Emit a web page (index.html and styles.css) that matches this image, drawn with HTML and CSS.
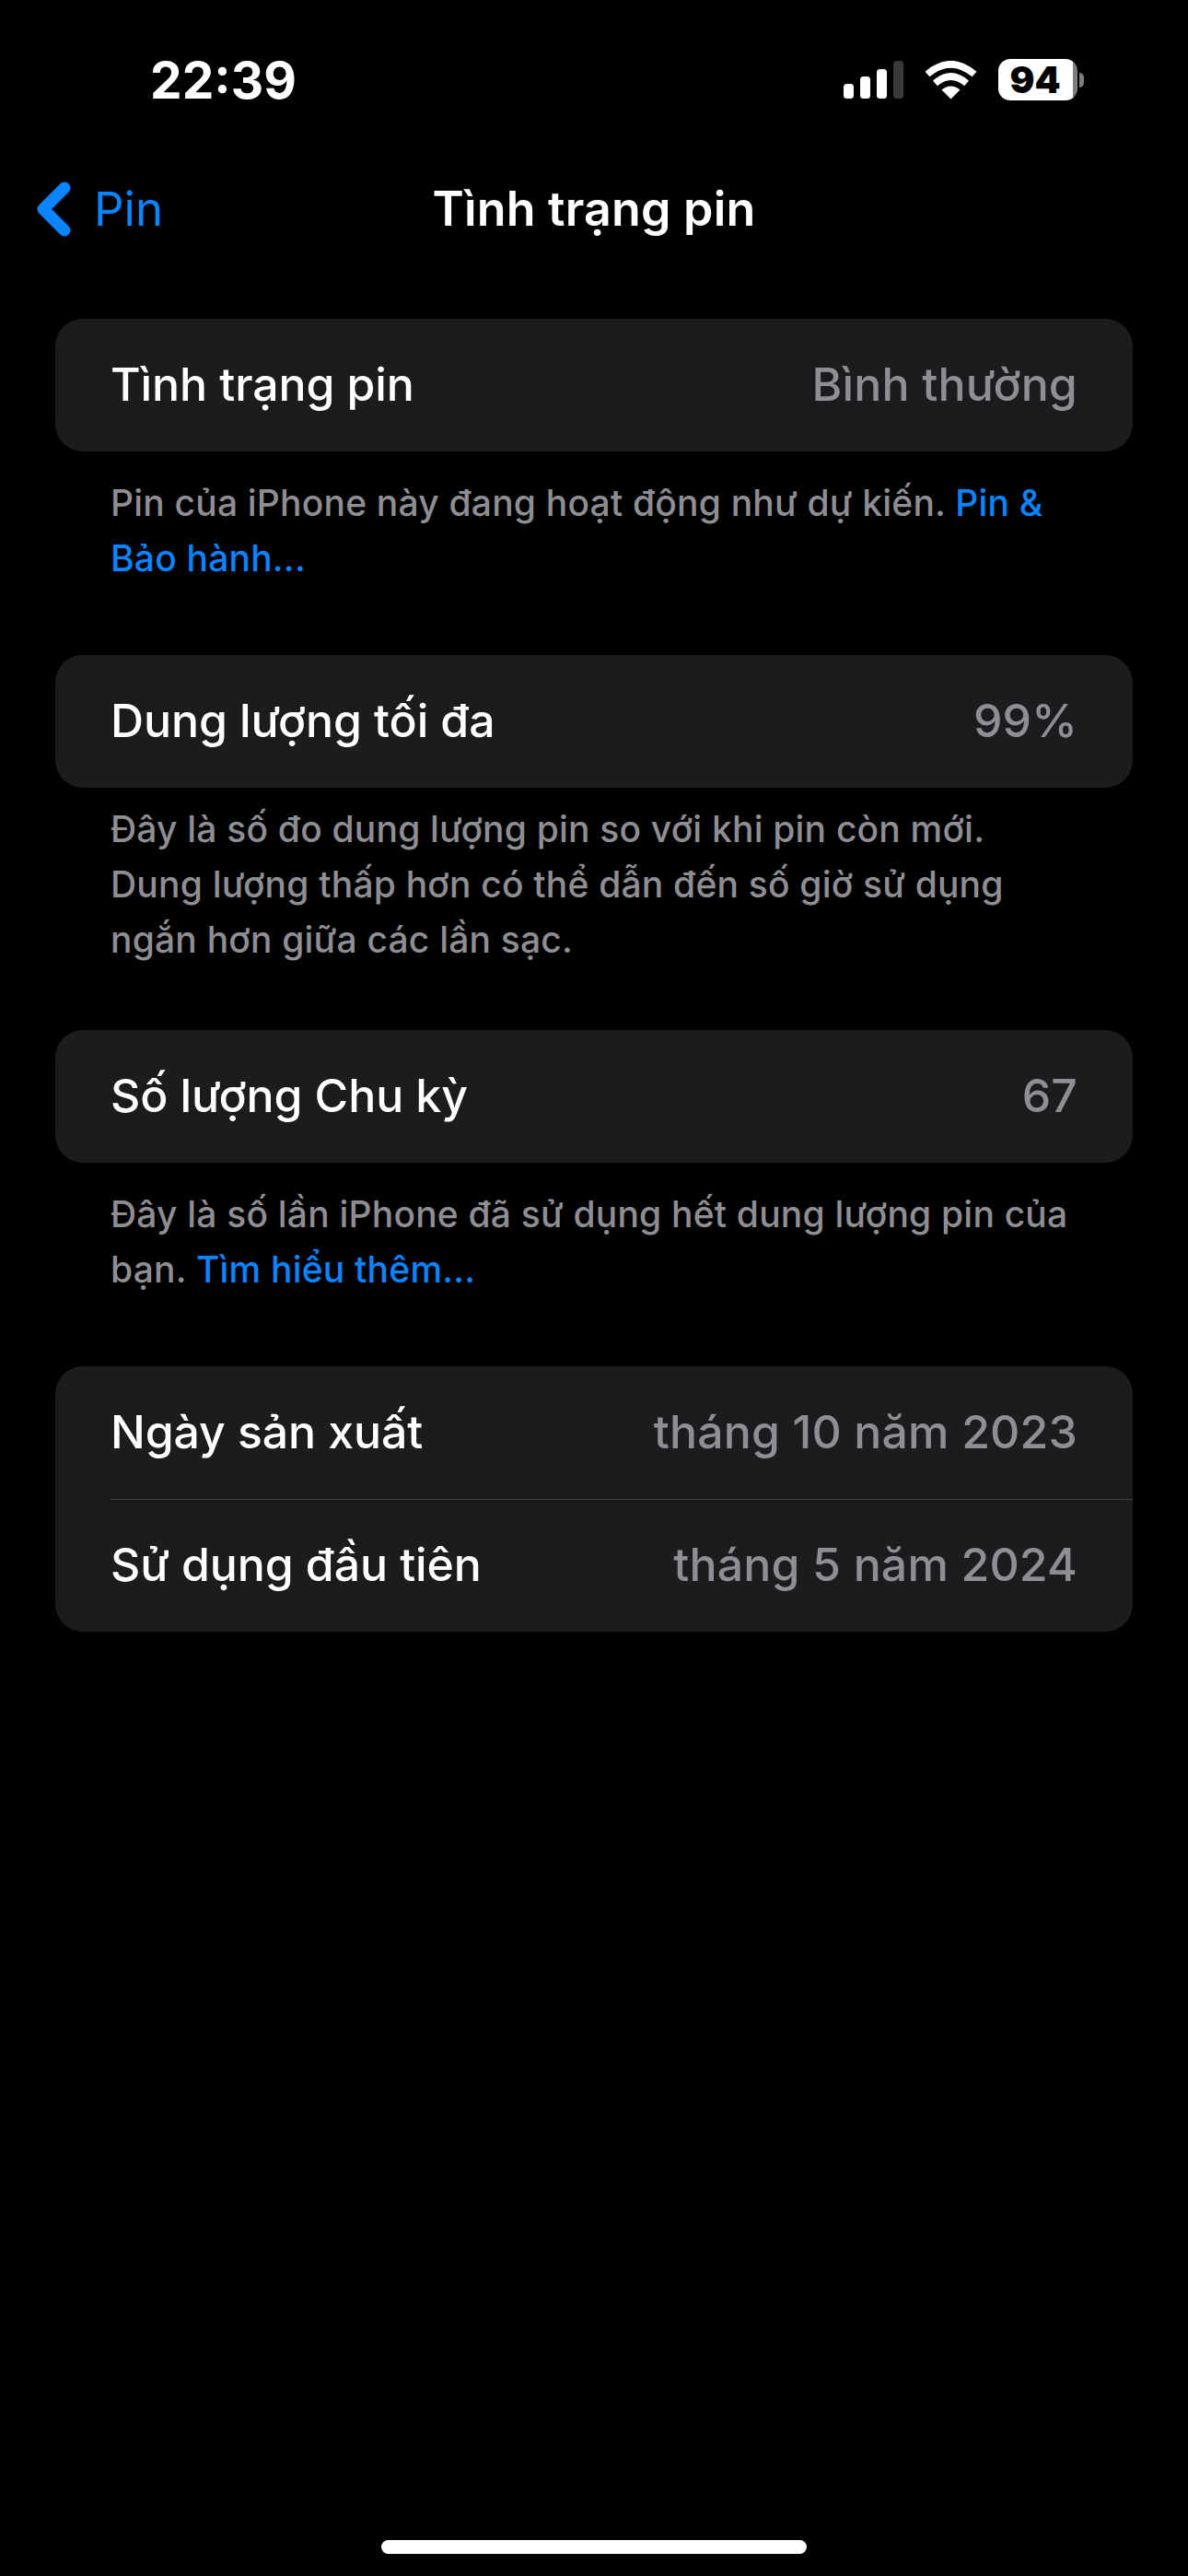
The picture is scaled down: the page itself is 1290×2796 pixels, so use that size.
FILE: index.html
```html
<!DOCTYPE html>
<html lang="vi">
<head>
<meta charset="utf-8">
<title>Tình trạng pin</title>
<link rel="stylesheet" href="styles.css">
</head>
<body>
<div class="screen">
  <header class="status">
    <span class="time">22:39</span>
    <div class="status-icons">
      <svg class="signal" width="65" height="41" viewBox="0 0 65 41">
        <rect x="0" y="25" width="11" height="16" rx="3.5" fill="#fff"/>
        <rect x="18" y="17" width="11" height="24" rx="3.5" fill="#fff"/>
        <rect x="36" y="9" width="11" height="32" rx="3.5" fill="#fff"/>
        <rect x="54" y="0" width="11" height="41" rx="3.5" fill="#3a3a3c"/>
      </svg>
      <svg class="wifi" width="57" height="42" viewBox="0 0 57 42" fill="none">
        <path d="M28.5 41.5 L18.5 31.5 Q28.5 23.5 38.5 31.5 Z" fill="#fff"/>
        <path d="M11.5 24.5 Q28.5 9.5 45.5 24.5" stroke="#fff" stroke-width="7.5" fill="none"/>
        <path d="M3 14.5 Q28.5 -7 54 14.5" stroke="#fff" stroke-width="7.5" fill="none"/>
      </svg>
      <div class="battery">
        <div class="battery-body"><span class="battery-num">94</span></div>
        <div class="battery-tip"></div>
      </div>
    </div>
  </header>

  <nav class="navbar">
    <a class="back">
      <svg class="chevron" width="38" height="60" viewBox="0 0 38 60" fill="none">
        <path d="M31 7 L8 30 L31 53" stroke="#0a84ff" stroke-width="13" stroke-linecap="round" stroke-linejoin="round"/>
      </svg>
      <span class="back-label">Pin</span>
    </a>
    <h1 class="title">Tình trạng pin</h1>
  </nav>

  <main class="content">
    <section class="group first">
      <div class="row"><span class="label">Tình trạng pin</span><span class="value">Bình thường</span></div>
    </section>
    <p class="note n1">Pin của iPhone này đang hoạt động như dự kiến. <span class="link">Pin &amp;<br>Bảo hành...</span></p>

    <section class="group">
      <div class="row"><span class="label">Dung lượng tối đa</span><span class="value">99%</span></div>
    </section>
    <p class="note n2">Đây là số đo dung lượng pin so với khi pin còn mới.<br>Dung lượng thấp hơn có thể dẫn đến số giờ sử dụng<br>ngắn hơn giữa các lần sạc.</p>

    <section class="group">
      <div class="row"><span class="label">Số lượng Chu kỳ</span><span class="value">67</span></div>
    </section>
    <p class="note n3">Đây là số lần iPhone đã sử dụng hết dung lượng pin của<br>bạn. <span class="link">Tìm hiểu thêm...</span></p>

    <section class="group">
      <div class="row"><span class="label">Ngày sản xuất</span><span class="value">tháng 10 năm 2023</span></div>
      <div class="row with-sep"><span class="label">Sử dụng đầu tiên</span><span class="value">tháng 5 năm 2024</span></div>
    </section>
  </main>

  <div class="home-area"><div class="home-indicator"></div></div>
</div>
</body>
</html>
```
FILE: styles.css
```css
* { box-sizing: border-box; margin: 0; padding: 0; }
html, body { background: #000; }
body { font-family: Inter, "Noto Sans", sans-serif; color: #fff; width: 1290px; height: 2796px; overflow: hidden; }
.screen { width: 1290px; height: 2796px; display: flex; flex-direction: column; }

.status { height: 184px; padding: 50px 113px 0 163px; display: flex; justify-content: space-between; align-items: flex-start; flex: none; }
.time { font-size: 55px; font-weight: 700; line-height: 74px; }
.status-icons { display: flex; align-items: flex-start; padding-top: 16px; }
.signal { margin-right: 23px; }
.wifi { margin-right: 23px; }
.battery { display: flex; align-items: center; margin-top: -2px; }
.battery-body { width: 86px; height: 45px; border-radius: 13px; background: linear-gradient(90deg, #fff 0 94%, #7d7d7d 94%); display: flex; align-items: center; justify-content: center; }
.battery-num { color: #000; font-size: 40px; font-weight: 900; line-height: 45px; padding-right: 6px; }
.battery-tip { width: 5px; height: 16px; margin-left: 2px; border-radius: 0 5px 5px 0; background: #7d7d7d; }

.navbar { position: relative; height: 86px; display: flex; align-items: center; justify-content: center; flex: none; }
.back { position: absolute; left: 39px; top: 13px; display: flex; align-items: center; color: #0a84ff; }
.chevron { display: block; }
.back-label { font-size: 51px; font-weight: 400; line-height: 60px; margin-left: 25px; }
.title { font-size: 52px; font-weight: 600; line-height: 60px; letter-spacing: 0.2px; }

.content { padding: 76px 60px 0 60px; flex: none; }
.group { background: #1c1c1e; border-radius: 30px; overflow: hidden; }
.row { height: 144px; padding: 0 60px 2px; display: flex; justify-content: space-between; align-items: center; font-size: 50px; position: relative; }
.with-sep::before { content: ""; position: absolute; left: 60px; right: 0; top: 0; height: 1px; background: #3d3d41; }
.label { color: #fff; font-weight: 500; letter-spacing: -0.1px; }
.value { color: #8e8e93; font-weight: 500; letter-spacing: 0.15px; }
.note { padding: 26px 60px 0 60px; font-size: 39px; line-height: 60px; color: #8e8e93; font-weight: 500; letter-spacing: 0.2px; white-space: nowrap; }
.n1 { height: 221px; }
.n2 { height: 263px; padding-top: 15px; }
.n3 { height: 221px; padding-top: 26px; }
.link { color: #0a84ff; }

.home-area { flex: 1; display: flex; align-items: flex-end; justify-content: center; padding-bottom: 24px; }
.home-indicator { width: 462px; height: 15px; border-radius: 8px; background: #fff; }
```
